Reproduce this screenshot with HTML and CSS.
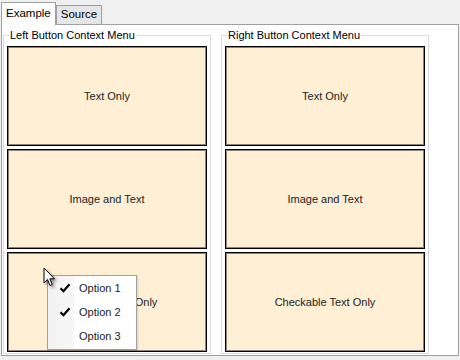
FILE: index.html
```html
<!DOCTYPE html>
<html>
<head>
<meta charset="utf-8">
<link rel="stylesheet" href="styles.css">
</head>
<body>
<div class="tabs">
  <div class="tab active">Example</div>
  <div class="tab">Source</div>
</div>
<div class="panel">
  <fieldset class="group">
    <legend>Left Button Context Menu</legend>
    <div class="box">Text Only</div>
    <div class="box">Image and Text</div>
    <div class="box">Checkable Text Only</div>
  </fieldset>
  <fieldset class="group">
    <legend>Right Button Context Menu</legend>
    <div class="box">Text Only</div>
    <div class="box">Image and Text</div>
    <div class="box">Checkable Text Only</div>
  </fieldset>
</div>
<div class="menu">
  <div class="item"><span class="check"><svg width="12" height="10" viewBox="0 0 12 10"><path d="M1.5 5.2 L4.5 8.2 L10.5 1.2" fill="none" stroke="#000" stroke-width="2.2"/></svg></span>Option 1</div>
  <div class="item"><span class="check"><svg width="12" height="10" viewBox="0 0 12 10"><path d="M1.5 5.2 L4.5 8.2 L10.5 1.2" fill="none" stroke="#000" stroke-width="2.2"/></svg></span>Option 2</div>
  <div class="item"><span class="check"></span>Option 3</div>
</div>
<svg class="cursor" width="14" height="22" viewBox="0 0 14 22"><path d="M1 1 L1 16 L4.5 12.5 L7 18.5 L9.2 17.5 L6.8 11.8 L11.5 11.8 Z" fill="#fff" stroke="#000" stroke-width="1" stroke-linejoin="round"/></svg>
</body>
</html>
```
FILE: styles.css
```css
html, body {
  margin: 0;
  padding: 0;
}
body {
  width: 460px;
  height: 360px;
  background: #f0f0f0;
  font-family: "Liberation Sans", Arial, sans-serif;
  font-size: 11px;
  color: #222;
  position: relative;
  overflow: hidden;
}
.tabs {
  display: flex;
  align-items: flex-end;
  height: 24px;
  padding-left: 1px;
}
.tab {
  box-sizing: border-box;
  height: 19px;
  line-height: 17px;
  padding: 0 4px;
  border: 1px solid #a0a0a0;
  border-bottom: none;
  background: #e6e6e6;
  color: #000;
  font-size: 11.5px;
}
.tab.active {
  height: 23px;
  line-height: 21px;
  background: #fff;
  position: relative;
  z-index: 1;
  margin-bottom: -1px;
}
.panel {
  box-sizing: border-box;
  margin: 0 1px;
  height: 332px;
  border: 1px solid #a0a0a0;
  background: #fff;
  display: flex;
  gap: 10px;
  padding: 4px 1px 1px 1px;
}
.group {
  margin: 0;
  border: 1px solid #dcdcdc;
  padding: 4px 3px 0 3px;
  display: flex;
  flex-direction: column;
  gap: 3px;
  min-width: 0;
}
.group legend {
  padding: 0 1px;
  margin-left: 2px;
  line-height: 13px;
  font-size: 11px;
  color: #000;
}
.box {
  box-sizing: border-box;
  width: 200px;
  height: 100px;
  background: #ffefd5;
  border: 1px solid #000;
  box-shadow: inset 0 0 0 1px rgba(0,0,0,0.45);
  display: flex;
  align-items: center;
  justify-content: center;
  color: #222;
}
.menu {
  position: absolute;
  left: 47px;
  top: 275px;
  width: 90px;
  height: 75px;
  box-sizing: border-box;
  border: 1px solid #a0a0a0;
  background: linear-gradient(to right, #f2f2f2 0, #f7f7f7 26px, #fff 27px);
  box-shadow: 1px 1px 2px rgba(0,0,0,0.15);
}
.item {
  height: 24px;
  display: flex;
  align-items: center;
  color: #222;
}
.check {
  width: 31px;
  display: flex;
  justify-content: flex-end;
  padding-right: 8px;
  box-sizing: border-box;
}
.cursor {
  position: absolute;
  left: 43px;
  top: 267px;
  filter: drop-shadow(2px 2px 1.5px rgba(0,0,0,0.45));
}
```
